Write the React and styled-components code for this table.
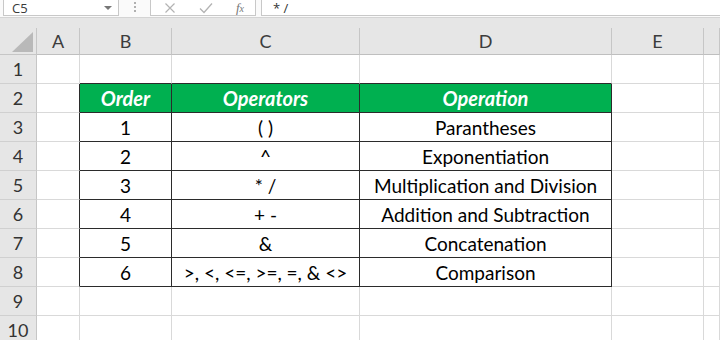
import React from 'react';
import styled, { createGlobalStyle } from 'styled-components';

const GlobalStyle = createGlobalStyle`
  html, body {
    margin: 0;
    padding: 0;
    background: #ffffff;
    overflow: hidden;
  }
  body {
    font-family: Lato, "Open Sans", sans-serif;
  }
`;

const COLS = ['A', 'B', 'C', 'D', 'E', ''];

const ROWS = [
  ['', '', '', '', '', ''],
  ['', 'Order', 'Operators', 'Operation', '', ''],
  ['', '1', '( )', 'Parantheses', '', ''],
  ['', '2', '^', 'Exponentiation', '', ''],
  ['', '3', '* /', 'Multiplication and Division', '', ''],
  ['', '4', '+ -', 'Addition and Subtraction', '', ''],
  ['', '5', '&', 'Concatenation', '', ''],
  ['', '6', '>, <, <=, >=, =, & <>', 'Comparison', '', ''],
  ['', '', '', '', '', ''],
  ['', '', '', '', '', ''],
];

// table B2:D8 (row index 1..7, col index 1..3)
const inTable = (r, c) => r >= 1 && r <= 7 && c >= 1 && c <= 3;

function App() {
  return (
    <Page>
      <GlobalStyle />
      <FormulaBar>
        <NameBox>
          <span>C5</span>
          <DropArrow />
        </NameBox>
        <Grip>
          <i /><i /><i />
        </Grip>
        <ButtonsBox>
          <svg width="12" height="12" viewBox="0 0 12 12">
            <path d="M1.5 1.5 L10.5 10.5 M10.5 1.5 L1.5 10.5" stroke="#b3b3b3" strokeWidth="1.2" fill="none" />
          </svg>
          <svg width="14" height="12" viewBox="0 0 14 12">
            <path d="M1 6.5 L5 10.5 L13 1.5" stroke="#b3b3b3" strokeWidth="1.3" fill="none" />
          </svg>
          <Fx>f<small>x</small></Fx>
        </ButtonsBox>
        <FormulaBox>* /</FormulaBox>
      </FormulaBar>

      <Gap />

      <Sheet>
        <Corner>
          <svg width="21" height="20" viewBox="0 0 21 20">
            <polygon points="21,0 21,20 0,20" fill="#b9b9b9" />
          </svg>
        </Corner>
        {COLS.map((c, i) => (
          <ColHead key={'h' + i}>{c}</ColHead>
        ))}

        {ROWS.map((row, r) => (
          <React.Fragment key={'r' + r}>
            <RowHead>{r + 1}</RowHead>
            {row.map((text, c) => (
              <Cell
                key={c}
                $head={r === 1 && inTable(r, c)}
                $rDark={inTable(r, c) || inTable(r, c + 1)}
                $bDark={inTable(r, c) || inTable(r + 1, c)}
              >
                {text}
              </Cell>
            ))}
          </React.Fragment>
        ))}
      </Sheet>
    </Page>
  );
}

const Page = styled.div`
  width: 720px;
  height: 340px;
  overflow: hidden;
  background: #ffffff;
`;

const FormulaBar = styled.div`
  height: 17px;
  background: #fafafa;
  border-bottom: 1px solid #d4d4d4;
  display: flex;
  align-items: flex-start;
  padding-left: 3px;
  font-family: "Segoe UI", "Open Sans", sans-serif;
`;

const Box = styled.div`
  height: 15px;
  background: #ffffff;
  border: 1px solid #c8c8c8;
  border-top: none;
  box-sizing: content-box;
  display: flex;
  align-items: center;
`;

const NameBox = styled(Box)`
  width: 116px;
  padding: 0 0 0 8px;
  box-sizing: border-box;
  height: 16px;
  justify-content: space-between;
  font-size: 13px;
  color: #3a3a3a;
`;

const DropArrow = styled.div`
  width: 0;
  height: 0;
  margin-right: 6px;
  border-left: 4px solid transparent;
  border-right: 4px solid transparent;
  border-top: 4px solid #777777;
`;

const Grip = styled.div`
  width: 31px;
  height: 14px;
  display: flex;
  flex-direction: column;
  align-items: center;
  justify-content: center;
  gap: 2px;
  i {
    display: block;
    width: 2px;
    height: 2px;
    background: #b0b0b0;
  }
`;

const ButtonsBox = styled(Box)`
  width: 106px;
  height: 16px;
  box-sizing: border-box;
  padding: 0 11px 0 13px;
  justify-content: space-between;
`;

const Fx = styled.span`
  font-family: "Liberation Serif", serif;
  font-style: italic;
  font-size: 13px;
  color: #777777;
  small { font-size: 10px; }
`;

const FormulaBox = styled(Box)`
  flex: 1;
  height: 16px;
  box-sizing: border-box;
  margin-left: 5px;
  padding-left: 11px;
  font-size: 13px;
  color: #333333;
  border-right: none;
`;

const Gap = styled.div`
  height: 10px;
  background: #e6e6e6;
`;

const Sheet = styled.div`
  display: grid;
  grid-template-columns: 37px 43px 92px 188px 252px 92px 1fr;
  grid-template-rows: 27px repeat(10, 29px);
`;

const Corner = styled.div`
  background: #e6e6e6;
  border-right: 1px solid #c6c6c6;
  border-bottom: 1px solid #c6c6c6;
  display: flex;
  align-items: flex-end;
  justify-content: flex-end;
  padding: 0 3px 2px 0;
  box-sizing: border-box;
`;

const ColHead = styled.div`
  background: #e6e6e6;
  border-right: 1px solid #c6c6c6;
  border-bottom: 1px solid #bfbfbf;
  display: flex;
  align-items: center;
  justify-content: center;
  font-size: 18px;
  color: #3c3c3c;
  box-sizing: border-box;
`;

const RowHead = styled.div`
  background: #e6e6e6;
  border-right: 1px solid #c6c6c6;
  border-bottom: 1px solid #d0d0d0;
  display: flex;
  align-items: center;
  justify-content: center;
  font-size: 18px;
  color: #333333;
  box-sizing: border-box;
`;

const Cell = styled.div`
  box-sizing: border-box;
  border-right: 1px solid ${p => (p.$rDark ? '#2b2b2b' : '#d9d9d9')};
  border-bottom: 1px solid ${p => (p.$bDark ? '#2b2b2b' : '#d9d9d9')};
  background: ${p => (p.$head ? '#00b050' : '#ffffff')};
  color: ${p => (p.$head ? '#ffffff' : '#000000')};
  font-weight: ${p => (p.$head ? 700 : 400)};
  font-style: ${p => (p.$head ? 'italic' : 'normal')};
  font-size: ${p => (p.$head ? '20px' : '19px')};
  display: flex;
  align-items: center;
  justify-content: center;
  white-space: nowrap;
`;

export default App;
